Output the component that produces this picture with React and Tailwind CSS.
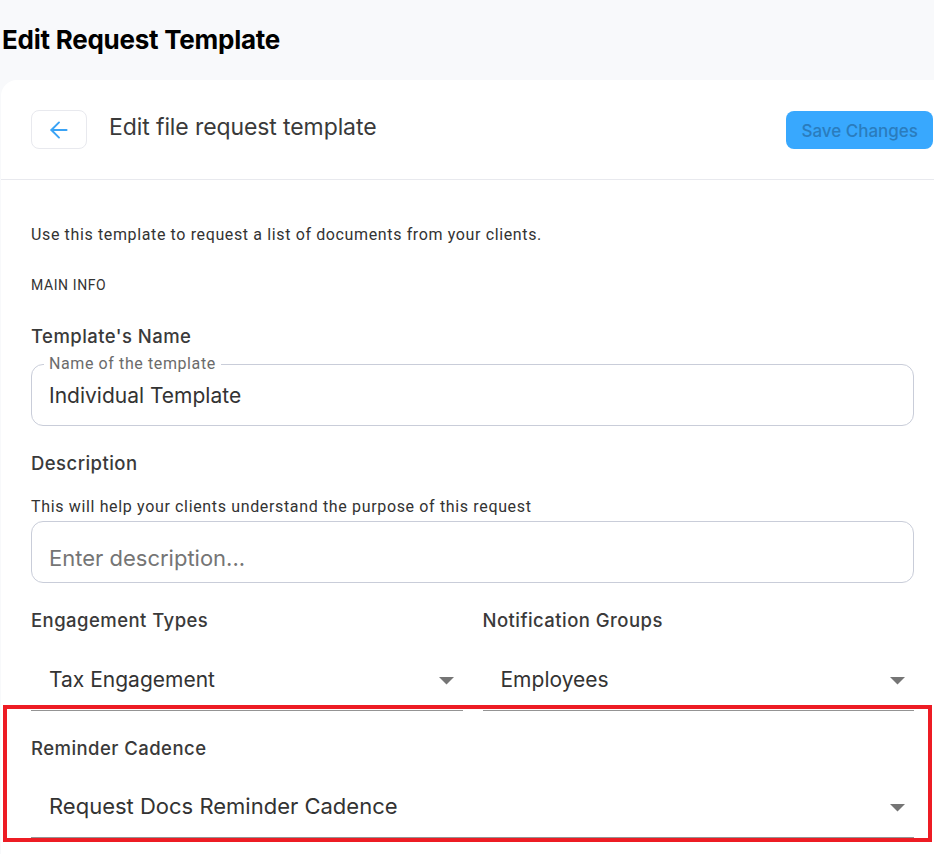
import React from "react";
import { ArrowLeft } from "lucide-react";

const font = { fontFamily: "Inter, 'Noto Sans', sans-serif" };
const body = { fontFamily: "Roboto, 'Liberation Sans', sans-serif" };

const Caret = () => (
  <svg width="15" height="8" viewBox="0 0 15 8" className="mt-[3px] text-[#757575]">
    <path d="M0 0h15L7.5 7.5z" fill="currentColor" />
  </svg>
);

const Select = ({ value, className = "" }) => (
  <div
    className={
      "flex items-center justify-between h-[62px] border-b border-[#949494] pl-[18px] pr-[9px] " +
      className
    }
  >
    <span className="text-[21px] text-[#333]">{value}</span>
    <Caret />
  </div>
);

const Label = ({ children, className = "" }) => (
  <h3
    className={
      "text-[18.5px] leading-[24px] font-medium tracking-[0.45px] text-[#3a3a3a] " +
      className
    }
  >
    {children}
  </h3>
);

const App = () => {
  return (
    <div
      className="relative w-[934px] h-[854px] overflow-hidden bg-[#f8f9fb]"
      style={font}
    >
      <h1 className="h-[80px] flex items-center pl-[2px] pb-[2px] text-[26px] font-bold text-black tracking-[-0.25px]">
        Edit Request Template
      </h1>

      <div className="ml-[1px] bg-white rounded-tl-2xl min-h-[774px]">
        {/* header */}
        <div className="h-[100px] flex items-center justify-between pl-[30px] pr-[1px] border-b border-[#e8e9ee]">
          <div className="flex items-center gap-[22px]">
            <button className="w-[56px] h-[39px] flex items-center justify-center border border-[#e8e9ee] rounded-lg">
              <ArrowLeft size={26} strokeWidth={1.8} className="text-[#3aa3f5]" />
            </button>
            <span className="-mt-[4px] text-[23px] tracking-[-0.1px] text-[#3a3a3a]">
              Edit file request template
            </span>
          </div>
          <button className="mt-[1px] h-[38px] px-[15px] pt-[3px] rounded-lg bg-[#38a8fe] text-[17px] font-medium text-[#2a7cbd]">
            Save Changes
          </button>
        </div>

        {/* body */}
        <div className="pl-[30px] pr-[20px] pt-[45px]">
          <p className="text-[16px] leading-[20px] tracking-[0.63px] text-[#333]" style={body}>
            Use this template to request a list of documents from your clients.
          </p>
          <p
            className="mt-[30px] text-[14px] leading-[20px] tracking-[0.6px] uppercase text-[#333]"
            style={body}
          >
            Main Info
          </p>

          <Label className="mt-[29px]">Template's Name</Label>
          <fieldset className="mt-[7px] h-[71px] border border-[#c9cdd9] rounded-xl px-[12px]">
            <legend
              className="px-[5px] text-[16px] leading-[18px] tracking-[0.6px] text-[#6b6b6b]"
              style={body}
            >
              Name of the template
            </legend>
            <div className="pt-[8px] pl-[5px] text-[21px] leading-[30px] text-[#333]">
              Individual Template
            </div>
          </fieldset>

          <Label className="mt-[25px]">Description</Label>
          <p
            className="mt-[22px] text-[16px] leading-[20px] tracking-[0.65px] text-[#333]"
            style={body}
          >
            This will help your clients understand the purpose of this request
          </p>
          <div className="mt-[4px] h-[62px] border border-[#c9cdd9] rounded-xl flex items-center pl-[17px] pt-[12px]">
            <span className="text-[22px] text-[#757575]">Enter description...</span>
          </div>

          <div className="mt-[25px] grid grid-cols-2 gap-x-[20px]">
            <div>
              <Label>Engagement Types</Label>
              <Select value="Tax Engagement" className="mt-[17px]" />
            </div>
            <div>
              <Label>Notification Groups</Label>
              <Select value="Employees" className="mt-[17px]" />
            </div>
          </div>

          <Label className="mt-[25px]">Reminder Cadence</Label>
          <Select value="Request Docs Reminder Cadence" className="mt-[16px] [&>span]:text-[22px]" />
        </div>
      </div>

      {/* annotation highlight */}
      <div className="absolute left-[3px] top-[705px] w-[929px] h-[137px] border-4 border-[#ed1c24] pointer-events-none" />
    </div>
  );
};

export default App;
